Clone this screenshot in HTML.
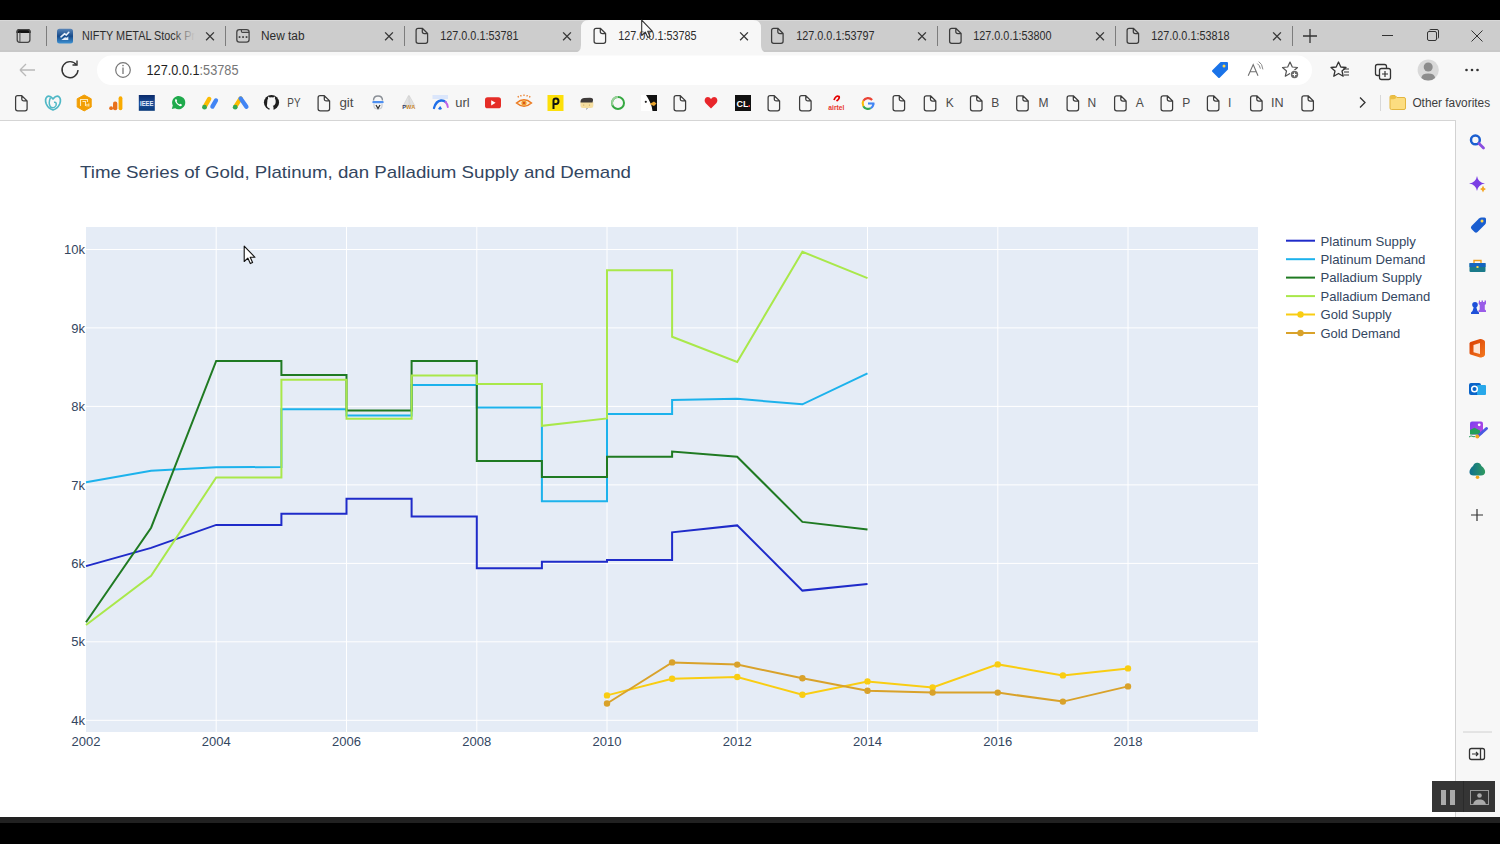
<!DOCTYPE html>
<html><head><meta charset="utf-8">
<style>
*{margin:0;padding:0;box-sizing:border-box}
html,body{width:1500px;height:844px;overflow:hidden;background:#000;font-family:"Liberation Sans",sans-serif}
.abs{position:absolute}
#tabbar{position:absolute;left:0;top:20px;width:1500px;height:32px;background:#cdcdcd}
#toolbar{position:absolute;left:0;top:52px;width:1500px;height:69px;background:#f7f7f7}
#bmline{position:absolute;left:0;top:120px;width:1456px;height:1px;background:#d5d5d5}
#page{position:absolute;left:0;top:121px;width:1455px;height:696px;background:#fff}
#side{position:absolute;left:1455px;top:121px;width:45px;height:696px;background:#f7f7f7;border-left:1px solid #d2d2d2}
#bot1{position:absolute;left:0;top:817px;width:1500px;height:6px;background:#212121}
.tab{position:absolute;top:20px;height:32px}
.tt{position:absolute;top:29px;font-size:12px;color:#2b2b2b;white-space:nowrap;letter-spacing:-0.1px}
.sep{position:absolute;top:26px;width:1px;height:20px;background:#7d7d7d}
.bt{position:absolute;top:95px;font-size:12px;color:#333;white-space:nowrap}
svg text.tk{font-family:"Liberation Sans",sans-serif;font-size:13px;fill:#33465f}
svg text.lg{font-family:"Liberation Sans",sans-serif;font-size:13px;fill:#33465f}
svg text.ttl{font-family:"Liberation Sans",sans-serif;font-size:17px;fill:#33465f}
</style></head><body>
<div id="tabbar"></div>
<div id="toolbar"></div>
<div class="abs" style="left:0;top:20px;width:1500px;height:1px;background:#d8d8d8"></div>
<div class="abs" style="left:0;top:50px;width:1500px;height:2px;background:#c8c8c8"></div>
<div id="bmline"></div>
<div id="page"></div>
<div id="side"></div>
<div id="bot1"></div>
<!-- active tab -->
<svg class="abs" style="left:573px;top:20px" width="196" height="33" viewBox="0 0 196 33">
<path d="M0 33 Q8 33 8 25 V8 Q8 0 16 0 H180 Q188 0 188 8 V25 Q188 33 196 33 Z" fill="#f7f7f7"/>
</svg>
<svg class="abs" style="left:0;top:0" width="1500" height="121" viewBox="0 0 1500 121">
<defs>
<g id="pg"><path d="M-3.8,-7.5 H0.3 L5.6,-2.3 V5.5 Q5.6,7.6 3.5,7.6 H-3.8 Q-5.9,7.6 -5.9,5.5 V-5.4 Q-5.9,-7.5 -3.8,-7.5 Z M0.3,-7.5 V-4.4 Q0.3,-2.3 2.4,-2.3 H5.6" fill="none" stroke="#3c3c3c" stroke-width="1.25" stroke-linejoin="round"/></g>
<g id="cx"><path d="M-3.9,-3.6 L3.9,4.2 M3.9,-3.6 L-3.9,4.2" stroke="#363636" stroke-width="1.3"/></g>
</defs>
<!-- tab actions -->
<path d="M17.1,32.5 V31.5 Q17.1,29.6 19.5,29.6 H27.6 Q30,29.6 30,31.5 V32.5 Z" fill="#111" stroke="#111" stroke-width="1.2"/>
<rect x="17.2" y="29.7" width="12.7" height="12.6" rx="2.5" fill="none" stroke="#444" stroke-width="1.3"/>
<path d="M19.9,32.6 V42.3" stroke="#555" stroke-width="1.1"/>
<!-- tab1 favicon -->
<defs><linearGradient id="nfg" x1="0" y1="0" x2="0" y2="1"><stop offset="0" stop-color="#5a86b8"/><stop offset=".5" stop-color="#164a8a"/><stop offset="1" stop-color="#3f93d4"/></linearGradient></defs>
<rect x="57" y="28.8" width="16" height="14.8" rx="2.5" fill="url(#nfg)"/>
<path d="M61,36.8 L64.5,33.8 L66.3,35 L68.8,32.3" fill="none" stroke="#e8f0fa" stroke-width="1.6" stroke-linecap="round"/>
<path d="M61.3,40 L65,37.3 L67,37.8 L68.3,36.2 V40 Z" fill="#e3ecf8"/>
<use href="#cx" x="210" y="36"/>
<!-- new tab icon -->
<rect x="236.8" y="29.6" width="12.3" height="12.5" rx="2.6" fill="none" stroke="#444" stroke-width="1.3"/>
<path d="M241.4,29.6 V31.2 Q241.4,32.3 242.5,32.3 H249.1" fill="none" stroke="#444" stroke-width="1.2"/>
<rect x="238.7" y="36.2" width="1.7" height="1.7" fill="#3a3a3a"/><rect x="242.2" y="36.2" width="1.7" height="1.7" fill="#3a3a3a"/><rect x="245.7" y="36.2" width="1.7" height="1.7" fill="#3a3a3a"/>
<use href="#cx" x="389" y="36"/>
<use href="#pg" x="422" y="35.8"/>
<use href="#cx" x="567" y="36"/>
<use href="#pg" x="600" y="35.8"/>
<use href="#cx" x="744" y="36"/>
<use href="#pg" x="777.5" y="35.8"/>
<use href="#cx" x="922" y="36"/>
<use href="#pg" x="955.5" y="35.8"/>
<use href="#cx" x="1100" y="36"/>
<use href="#pg" x="1133" y="35.8"/>
<use href="#cx" x="1277" y="36"/>
<!-- plus -->
<path d="M1310,29 V43 M1303,36 H1317" stroke="#333" stroke-width="1.3"/>
<!-- window controls -->
<path d="M1382,35.5 H1393" stroke="#333" stroke-width="1"/>
<rect x="1427.5" y="31.5" width="9" height="9" rx="1.5" fill="none" stroke="#333" stroke-width="1"/>
<path d="M1429.5,30 Q1430,29.5 1431,29.5 H1437 Q1438.5,29.5 1438.5,31 V37 Q1438.5,38 1438,38.5" fill="none" stroke="#333" stroke-width="1"/>
<path d="M1471.5,30.5 L1482.5,41.5 M1482.5,30.5 L1471.5,41.5" stroke="#333" stroke-width="1"/>
<!-- toolbar -->
<path d="M20,70 H35 M20,70 L26,64 M20,70 L26,76" fill="none" stroke="#b9b9b9" stroke-width="1.3"/>
<path d="M76.5,65 A8,8 0 1 0 78,70" fill="none" stroke="#333" stroke-width="1.4"/>
<path d="M72.5,65 H77 V60.5" fill="none" stroke="#333" stroke-width="1.4"/>
<rect x="97" y="55.5" width="1215" height="29.5" rx="14.75" fill="#fff"/>
<circle cx="123" cy="70" r="7.3" fill="none" stroke="#777" stroke-width="1.2"/>
<path d="M123,67.5 V74" stroke="#777" stroke-width="1.3"/><circle cx="123" cy="65.6" r=".8" fill="#777"/>
<!-- tag shopping -->
<path d="M1213,71 L1221,63 H1227 V69 L1219,77 Z" fill="#1a73e8" stroke="#1a73e8" stroke-width="2" stroke-linejoin="round"/>
<circle cx="1224" cy="66" r="1.5" fill="#ffd54a"/>
<!-- read aloud -->
<path d="M1248.2,75.8 L1253.2,64.6 L1258,75.8 M1249.9,71.8 H1256.5" fill="none" stroke="#707070" stroke-width="1.1"/>
<path d="M1257.3,63.6 Q1259.8,65.2 1260.4,68.6 M1258.7,61.6 Q1262.3,63.6 1262.9,69.4" fill="none" stroke="#8a8a8a" stroke-width="1"/>
<!-- star add -->
<path d="M1290,62 L1292.3,67 L1297.5,67.5 L1293.5,71 L1294.7,76.2 L1290,73.5 L1285.3,76.2 L1286.5,71 L1282.5,67.5 L1287.7,67 Z" fill="none" stroke="#555" stroke-width="1.2" stroke-linejoin="round"/>
<circle cx="1294.5" cy="74.5" r="4.6" fill="#fff"/><circle cx="1294.5" cy="74.5" r="3.7" fill="#6a6a6a"/><path d="M1294.5,72.5 V76.5 M1292.5,74.5 H1296.5" stroke="#fff" stroke-width="1.1"/>
<!-- favorites -->
<path d="M1338.5,62 L1340.8,67 L1346,67.5 L1342,71 L1343.2,76.2 L1338.5,73.5 L1333.8,76.2 L1335,71 L1331,67.5 L1336.2,67 Z" fill="none" stroke="#333" stroke-width="1.3" stroke-linejoin="round"/>
<path d="M1343,69 H1349 M1344,72 H1349 M1344,75 H1349" stroke="#333" stroke-width="1.2"/>
<!-- collections -->
<rect x="1375.5" y="64.5" width="11" height="11" rx="2" fill="none" stroke="#333" stroke-width="1.3"/>
<rect x="1379.5" y="68.5" width="11" height="11" rx="2" fill="#f7f7f7" stroke="#333" stroke-width="1.3"/>
<path d="M1385,71 V77 M1382,74 H1388" stroke="#333" stroke-width="1.2"/>
<!-- profile -->
<circle cx="1428.2" cy="70" r="10.6" fill="#d9d9d9"/>
<circle cx="1428.2" cy="67" r="4.5" fill="#8c8c8c"/>
<path d="M1421.3,78 Q1421.8,73.6 1428.2,73.6 Q1434.6,73.6 1435.1,78 Q1432.5,80.6 1428.2,80.6 Q1423.9,80.6 1421.3,78 Z" fill="#8c8c8c"/>
<!-- more -->
<circle cx="1466.5" cy="70" r="1.3" fill="#333"/><circle cx="1472" cy="70" r="1.3" fill="#333"/><circle cx="1477.5" cy="70" r="1.3" fill="#333"/>
</svg>
<svg class="abs" style="left:0;top:0" width="1500" height="121" viewBox="0 0 1500 121" font-family="Liberation Sans">
<defs><linearGradient id="fd" x1="0" x2="1"><stop offset="0.8" stop-color="#2b2b2b"/><stop offset="1" stop-color="#2b2b2b" stop-opacity="0"/></linearGradient></defs>
<text x="82" y="40" font-size="12" fill="url(#fd)" textLength="113" lengthAdjust="spacingAndGlyphs">NIFTY METAL Stock Pr</text>
<text x="261" y="40" font-size="12" fill="#2b2b2b" textLength="43.5" lengthAdjust="spacingAndGlyphs">New tab</text>
<text x="440.3" y="40" font-size="12" fill="#2b2b2b" textLength="78.2" lengthAdjust="spacingAndGlyphs">127.0.0.1:53781</text>
<text x="618.3" y="40" font-size="12" fill="#2b2b2b" textLength="78.2" lengthAdjust="spacingAndGlyphs">127.0.0.1:53785</text>
<text x="796.3" y="40" font-size="12" fill="#2b2b2b" textLength="78.2" lengthAdjust="spacingAndGlyphs">127.0.0.1:53797</text>
<text x="973.3" y="40" font-size="12" fill="#2b2b2b" textLength="78.2" lengthAdjust="spacingAndGlyphs">127.0.0.1:53800</text>
<text x="1151.3" y="40" font-size="12" fill="#2b2b2b" textLength="78.2" lengthAdjust="spacingAndGlyphs">127.0.0.1:53818</text>
<text x="146.5" y="75" font-size="14" fill="#1f1f1f" textLength="92" lengthAdjust="spacingAndGlyphs">127.0.0.1<tspan fill="#767676">:53785</tspan></text>
</svg>
<div class="sep" style="left:46px"></div>
<div class="sep" style="left:225px"></div>
<div class="sep" style="left:404px"></div>
<div class="sep" style="left:937px"></div>
<div class="sep" style="left:1115px"></div>
<div class="sep" style="left:1292px"></div>
<svg class="abs" style="left:0;top:85px" width="1456" height="35" viewBox="0 85 1456 35">
<defs>
<g id="bp"><path d="M-3.8,-7.5 H0.3 L5.6,-2.3 V5.5 Q5.6,7.6 3.5,7.6 H-3.8 Q-5.9,7.6 -5.9,5.5 V-5.4 Q-5.9,-7.5 -3.8,-7.5 Z M0.3,-7.5 V-4.4 Q0.3,-2.3 2.4,-2.3 H5.6" fill="none" stroke="#3c3c3c" stroke-width="1.25" stroke-linejoin="round"/></g>
</defs>
<use href="#bp" x="21.5" y="103.2"/>
<!-- godaddy -->
<path d="M53,98.8 Q49.5,95 47,96.8 Q44.5,99 46.3,104 Q48.5,108.8 53,110 Q57.5,108.8 59.7,104 Q61.5,99 59,96.8 Q56.5,95 53,98.8 Z" fill="none" stroke="#4fb8c6" stroke-width="1.7"/>
<path d="M50.5,97.5 Q48,103 50.5,107 Q54,109 56,105.5 Q57,102 54,102.3" fill="none" stroke="#4fb8c6" stroke-width="1.5"/>
<!-- orange hex -->
<path d="M84.2,95 L91.2,98.8 V107 L84.2,110.9 L77.2,107 V98.8 Z" fill="#f29f05" stroke="#f29f05" stroke-width="1" stroke-linejoin="round"/>
<path d="M80.5,106 V99.5 H87.5 V102 M82.5,101.5 H85.5 V106 M87,104 V106.5 M88.8,103.5 V106.5" fill="none" stroke="#fde9b8" stroke-width="1.1"/>
<!-- analytics -->
<circle cx="111.1" cy="108.2" r="1.9" fill="#e8711c"/>
<rect x="113" y="101.4" width="4.3" height="8.8" rx="2" fill="#e8711c"/>
<rect x="118.6" y="96.3" width="3.8" height="13.9" rx="1.9" fill="#f9ab00"/>
<!-- IEEE -->
<defs><linearGradient id="ieg" x1="0" y1="0" x2="0" y2="1"><stop offset="0" stop-color="#0b2a6a"/><stop offset=".55" stop-color="#1a4f9a"/><stop offset="1" stop-color="#0a3a7a"/></linearGradient></defs>
<rect x="138.8" y="95" width="16" height="15.8" fill="url(#ieg)"/>
<text x="140" y="105.7" font-size="7.2" fill="#e8eefa" font-family="Liberation Sans" font-weight="bold" textLength="13.5" lengthAdjust="spacingAndGlyphs">IEEE</text>
<!-- whatsapp -->
<path d="M171.8,109 L172.8,105.6 A6.6,6.6 0 1 1 175.2,108.2 Z" fill="#1faa4c"/>
<path d="M175.3,99.3 Q174.8,100.2 175.3,101.8 Q176.5,104.6 179.6,106 Q181,106.4 181.7,105.7 L181.8,104.6 L180.1,103.8 L179.3,104.5 Q177.4,103.6 176.6,101.8 L177.2,101 L176.5,99.2 Z" fill="#fff"/>
<!-- google ads -->
<path d="M204.8,106.6 L209.2,98.9" stroke="#fbbc04" stroke-width="4.3" stroke-linecap="round"/>
<path d="M212.4,106.6 L216,100.4" stroke="#4285f4" stroke-width="4.3" stroke-linecap="round"/>
<circle cx="204.5" cy="107.2" r="2.4" fill="#34a853"/>
<!-- ads A -->
<path d="M240.6,98.4 L235.8,105.8" stroke="#fbbc04" stroke-width="4.3" stroke-linecap="round"/>
<path d="M240.6,98.4 L246.4,106.8" stroke="#4285f4" stroke-width="4.3" stroke-linecap="round"/>
<circle cx="235.2" cy="107.2" r="2.4" fill="#34a853"/>
<!-- github -->
<g transform="translate(271.5,102.5)">
<circle r="7.6" fill="#1f1f1f"/>
<path d="M-4.2,-0.6 Q-4.4,-2.8 -3.4,-4 L-3.5,-6 L-1.6,-5 Q0,-5.5 1.6,-5 L3.5,-6 L3.4,-4 Q4.4,-2.8 4.2,-0.6 Q4,2.6 1.3,3.3 Q2,3.9 2,5 V7.8 H-2 V5.6 Q-3.6,6 -4.6,3.6" fill="#f7f7f7"/>
<path d="M-2,5 Q-2,3.9 -1.3,3.3 Q-4,2.6 -4.2,-0.6" fill="none" stroke="#f7f7f7" stroke-width=".2"/>
</g>
<use href="#bp" x="324" y="103.2"/>
<!-- misc icon 378 -->
<path d="M373.5,100.5 Q373.5,96 378,96 Q382.5,96 382.5,100.5" fill="none" stroke="#8a8f96" stroke-width="1.4"/>
<rect x="372.3" y="101" width="11.4" height="2.2" rx="1" fill="#4d8ff0"/>
<path d="M374,104 V106 Q374,109 378,109 Q382,109 382,106 V104" fill="none" stroke="#c8ccd2" stroke-width="1.2"/>
<path d="M376,105 L378,108.5 L380,105" fill="none" stroke="#333" stroke-width="1.3"/>
<!-- PWA -->
<path d="M403,106 L408.5,95.5 L409.5,106 Z M410,106 L409.2,95.5 L415,106 Z" fill="#e2e2e2" stroke="#c9c9c9" stroke-width=".5"/>
<text x="402.3" y="109.3" font-size="5.6" font-weight="bold" fill="#2e3a6a" font-family="Liberation Sans" textLength="13" lengthAdjust="spacingAndGlyphs">P<tspan fill="#c8862a">WA</tspan></text>
<!-- arc -->
<rect x="432.5" y="95" width="15.5" height="4" fill="#dbe6fb"/>
<path d="M434,108 Q436,101 441,100.5 Q444,100.3 445.5,102" fill="none" stroke="#1f6fe8" stroke-width="2.3" stroke-linecap="round"/>
<path d="M445.5,102 Q447.5,104 447.8,107" fill="none" stroke="#c062e6" stroke-width="2" stroke-linecap="round"/>
<path d="M438,108.8 L440.2,106 L442,108.8 Q440,110.5 438,108.8 Z" fill="#1f6fe8"/>
<!-- youtube -->
<rect x="485" y="97.3" width="16" height="11" rx="2.6" fill="#e52d27"/>
<path d="M491.2,100.2 L495.6,102.8 L491.2,105.4 Z" fill="#fff"/>
<!-- eye -->
<path d="M516.5,103 Q524,96.5 531.5,103 Q524,109.5 516.5,103 Z" fill="#fdeccf" stroke="#ec7a22" stroke-width="1.5"/>
<circle cx="524" cy="103" r="2.6" fill="#f0a030"/>
<circle cx="524" cy="103" r="1.2" fill="#d9531e"/>
<path d="M518.5,97.5 L518,96 M521,96.5 L520.8,95 M524,96 V94.6 M527,96.5 L527.2,95 M529.5,97.5 L530,96" stroke="#ec7a22" stroke-width="1.2"/>
<!-- P -->
<rect x="547.5" y="95" width="16" height="16" fill="#fde00a"/>
<path d="M553.5,109 V100.5 Q553.5,98.5 556,98.5 Q558.5,98.5 558.5,101.3 Q558.5,104 556,104 H553.5" fill="none" stroke="#111" stroke-width="2"/>
<!-- face -->
<path d="M580.5,102 V106 Q580.5,108 583,108 H591 Q593.3,108 593.3,106 V102 Z" fill="#f5dea0"/>
<path d="M580.5,103 Q580,98.5 584,98 L590,97.8 Q593.5,98 593,100.5 L592.5,102.5 H580.5 Z" fill="#3f3b3a"/>
<circle cx="583.7" cy="105" r=".6" fill="#b89a5a"/><circle cx="589.5" cy="105" r=".6" fill="#b89a5a"/>
<path d="M586,108.5 Q586.5,109.5 587.5,108.5" fill="none" stroke="#555" stroke-width=".7"/>
<!-- green circle -->
<circle cx="618" cy="103" r="6" fill="none" stroke="#34a840" stroke-width="2"/>
<path d="M618,97 A6,6 0 0 0 612.5,105.3" fill="none" stroke="#9ad29a" stroke-width="2"/>
<!-- penguin -->
<rect x="641" y="95" width="16" height="16" fill="#fff"/>
<path d="M646,95 H657 V111 H652.5 Q652,104 646,95 Z" fill="#111"/>
<circle cx="645.8" cy="101.8" r="1.1" fill="#222"/>
<path d="M649.5,104 L654,101.5 L656.5,103.5 L654,106 Z" fill="#e9a530"/>
<use href="#bp" x="680" y="103.2"/>
<!-- heart -->
<path d="M711,108.5 L705.5,103 Q703.5,100 706,97.5 Q709,96 711,99 Q713,96 716,97.5 Q718.5,100 716.5,103 Z" fill="#e8262b"/>
<!-- CL -->
<rect x="735" y="95" width="16" height="16" fill="#111"/>
<text x="736.5" y="106.5" font-size="9" font-weight="bold" fill="#fff" font-family="Liberation Sans">CL</text>
<rect x="748.5" y="105" width="1.5" height="2" fill="#e33"/>
<use href="#bp" x="774" y="103.2"/>
<use href="#bp" x="805.5" y="103.2"/>
<!-- airtel -->
<path d="M834,100 Q836,95 839,96.5 Q840,98.5 836.5,101" fill="none" stroke="#e40000" stroke-width="1.8"/>
<text x="828.3" y="110" font-size="6.8" font-weight="bold" fill="#e8382e" font-family="Liberation Sans" textLength="16" lengthAdjust="spacingAndGlyphs">airtel</text>
<!-- G -->
<path d="M872.14,100.03 A5.4,5.4 0 0 0 863.32,100.80" fill="none" stroke="#ea4335" stroke-width="2.1"/>
<path d="M863.32,100.80 A5.4,5.4 0 0 0 863.32,106.20" fill="none" stroke="#fbbc05" stroke-width="2.1"/>
<path d="M863.32,106.20 A5.4,5.4 0 0 0 870.70,108.18" fill="none" stroke="#34a853" stroke-width="2.1"/>
<path d="M870.70,108.18 A5.4,5.4 0 0 0 873.40,103.50" fill="none" stroke="#4285f4" stroke-width="2.1"/>
<path d="M868,103.5 H874.4" stroke="#4285f4" stroke-width="2.1"/>
<use href="#bp" x="899" y="103.2"/>
<use href="#bp" x="930.2" y="103.3"/>
<use href="#bp" x="976.4" y="103.3"/>
<use href="#bp" x="1022.6" y="103.3"/>
<use href="#bp" x="1073" y="103.3"/>
<use href="#bp" x="1120.5" y="103.3"/>
<use href="#bp" x="1167" y="103.3"/>
<use href="#bp" x="1213.3" y="103.3"/>
<use href="#bp" x="1256.5" y="103.3"/>
<use href="#bp" x="1307.8" y="103.3"/>
<path d="M1360,97.5 L1365,102.5 L1360,107.5" fill="none" stroke="#333" stroke-width="1.3"/>
<path d="M1380.5,95 V111" stroke="#d8d8d8" stroke-width="1"/>
<path d="M1390,97 Q1390,95.5 1391.5,95.5 H1395 L1397,97.5 H1404 Q1405.5,97.5 1405.5,99 V108 Q1405.5,109.5 1404,109.5 H1391.5 Q1390,109.5 1390,108 Z" fill="#fcdd80" stroke="#e3b640" stroke-width="1"/>
<path d="M1390.2,99.2 V97 Q1390.2,95.7 1391.5,95.7 H1394.6 Q1396.5,95.7 1396.5,97.4 Q1395.5,99.2 1393.5,99.2 Z" fill="#ebbf45"/>
</svg>
<svg class="abs" style="left:0;top:85px" width="1500" height="35" viewBox="0 85 1500 35" font-family="Liberation Sans">
<text x="287.3" y="107.2" font-size="12" fill="#4a4a4a" textLength="13.2" lengthAdjust="spacingAndGlyphs">PY</text>
<text x="339.4" y="107.2" font-size="12" fill="#4a4a4a" textLength="14.2" lengthAdjust="spacingAndGlyphs">git</text>
<text x="455.2" y="107.2" font-size="12" fill="#4a4a4a" textLength="14.4" lengthAdjust="spacingAndGlyphs">url</text>
<text x="949.8" y="107.2" font-size="12" fill="#4a4a4a" text-anchor="middle">K</text>
<text x="995.3" y="107.2" font-size="12" fill="#4a4a4a" text-anchor="middle">B</text>
<text x="1043.5" y="107.2" font-size="12" fill="#4a4a4a" text-anchor="middle">M</text>
<text x="1091.9" y="107.2" font-size="12" fill="#4a4a4a" text-anchor="middle">N</text>
<text x="1139.8" y="107.2" font-size="12" fill="#4a4a4a" text-anchor="middle">A</text>
<text x="1186.2" y="107.2" font-size="12" fill="#4a4a4a" text-anchor="middle">P</text>
<text x="1229.7" y="107.2" font-size="12" fill="#4a4a4a" text-anchor="middle">I</text>
<text x="1271.0" y="107.2" font-size="12" fill="#4a4a4a" textLength="12.6" lengthAdjust="spacingAndGlyphs">IN</text>
<text x="1412.4" y="107.2" font-size="12" fill="#3d3d3d" textLength="77.7" lengthAdjust="spacingAndGlyphs">Other favorites</text>
</svg>
<!-- sidebar -->
<svg class="abs" style="left:1456px;top:121px" width="44" height="700" viewBox="1456 121 44 700">
<circle cx="1475.4" cy="139.9" r="4.4" fill="none" stroke="#1a5fd0" stroke-width="2.5"/>
<path d="M1479,143.5 L1483.5,148" stroke="#8a4ee0" stroke-width="2.8" stroke-linecap="round"/>
<path d="M1477,176 Q1478,182.5 1485,183.5 Q1478,184.5 1477,191 Q1476,184.5 1469,183.5 Q1476,182.5 1477,176 Z" fill="#7b3fe4"/>
<path d="M1483,185.5 Q1483.6,188.4 1486,189 Q1483.6,189.6 1483,192.5 Q1482.4,189.6 1480,189 Q1482.4,188.4 1483,185.5Z" fill="#f5a623"/>
<path d="M1471.5,226 L1479,218.5 Q1480,217.5 1481.5,217.5 H1484.5 Q1486,217.5 1486,219 V222 Q1486,223.5 1485,224.5 L1477.5,232 Q1476,233.3 1474.5,232 L1471.5,229 Q1470.2,227.5 1471.5,226 Z" fill="#1a5ed0"/>
<circle cx="1482" cy="221" r="1.5" fill="#ffd54a"/>
<rect x="1469.5" y="263" width="16" height="9" rx="1" fill="#1a7a8a"/>
<rect x="1469.5" y="263" width="16" height="4" fill="#1565c0"/>
<path d="M1474,263 V260.5 H1481 V263" fill="none" stroke="#f0a020" stroke-width="1.4"/>
<rect x="1476.5" y="266" width="2" height="2" fill="#ffd54a"/>
<defs><linearGradient id="ofg" x1="0" y1="0" x2="1" y2="1"><stop offset="0" stop-color="#d83b01"/><stop offset="1" stop-color="#f47a20"/></linearGradient></defs>
<path d="M1479,300.5 H1480 V302 H1481.5 V300.5 H1483 V302 H1484.5 V300.5 H1486 V304 L1484.8,305 V309.5 L1486,310.5 V312 H1478.5 V310.5 L1479.7,309.5 V305 L1478.5,304 Z" fill="#9a5ce8"/>
<circle cx="1475" cy="304.8" r="2.8" fill="#1e50d8"/>
<path d="M1473.8,307 H1476.2 L1477.5,311 L1479,312.5 V314 H1471 V312.5 L1472.5,311 Z" fill="#1e50d8"/>
<path d="M1469.5,343.5 Q1469.5,342.5 1470.5,342 L1480,339 Q1481,338.8 1482,339.3 L1484,340.3 Q1485,340.8 1485,342 V354.5 Q1485,355.7 1484,356.2 L1482,357.2 Q1481,357.7 1480,357.4 L1470.5,354.5 Q1469.5,354 1469.5,353 Z" fill="url(#ofg)"/>
<path d="M1473.5,345 L1480,343 V354 L1473.5,352.3 Z" fill="#fde6d8"/>
<rect x="1469" y="383" width="12" height="12" rx="2" fill="#0a64c8"/>
<rect x="1477" y="385" width="9" height="10" rx="1" fill="#28a8ea"/>
<circle cx="1474.5" cy="389" r="2.8" fill="none" stroke="#fff" stroke-width="1.5"/>
<defs><linearGradient id="trg" x1="0" x2="1"><stop offset="0" stop-color="#0f6f8f"/><stop offset="1" stop-color="#2f9a5e"/></linearGradient>
<linearGradient id="dsg" x1="0" y1="0" x2="1" y2="1"><stop offset="0" stop-color="#7a3cf0"/><stop offset="1" stop-color="#c04ae0"/></linearGradient></defs>
<rect x="1470" y="421.5" width="13" height="13" rx="2" fill="url(#dsg)"/>
<circle cx="1479.2" cy="424.8" r="1.4" fill="#fff"/>
<path d="M1470,434.5 V430 L1474.5,427.8 L1480,430.5 V434.5 Z" fill="#22a05a"/>
<path d="M1477.5,436.5 L1486.5,428.5" stroke="#4a5ae0" stroke-width="3" stroke-linecap="round"/>
<circle cx="1477.3" cy="436.4" r="2" fill="#f0a820"/>
<path d="M1469,437 Q1471,435 1473,436.5 Q1474.5,437.5 1475,436" fill="none" stroke="#2a9a5a" stroke-width="1"/>
<path d="M1477.3,462.7 Q1480,462.5 1481.5,466 Q1485.5,469 1485.1,472.5 Q1484.5,475.5 1481,475.5 H1473.5 Q1469.8,475.5 1469.5,472.5 Q1469.2,469 1473,466 Q1474.5,462.5 1477.3,462.7 Z" fill="url(#trg)"/>
<circle cx="1477.5" cy="477.3" r="1.8" fill="#f0a820"/>
<path d="M1477,509 V521 M1471,515 H1483" stroke="#333" stroke-width="1.2"/>
<path d="M1463,732 H1492" stroke="#d0d0d0" stroke-width="1"/>
<rect x="1469.5" y="748.5" width="15" height="11" rx="2" fill="none" stroke="#333" stroke-width="1.3"/>
<path d="M1480.5,748.5 V759.5" stroke="#333" stroke-width="1.3"/>
<path d="M1472,754 H1478 M1476,752 L1478,754 L1476,756" fill="none" stroke="#333" stroke-width="1.2"/>
</svg>
<!-- overlay control -->
<div class="abs" style="left:1432px;top:781px;width:63px;height:31px;background:#353535"></div>
<div class="abs" style="left:1463px;top:781px;width:1px;height:31px;background:#2a2a2a"></div>
<div class="abs" style="left:1441px;top:790px;width:5px;height:15px;background:#aaa"></div>
<div class="abs" style="left:1449.5px;top:790px;width:5px;height:15px;background:#aaa"></div>
<svg class="abs" style="left:1468px;top:788px" width="24" height="20" viewBox="0 0 24 20">
<rect x="2.5" y="2.5" width="18" height="14" fill="none" stroke="#999" stroke-width="1"/>
<circle cx="11.5" cy="7.5" r="2.3" fill="#aaa"/>
<path d="M5,16.5 Q6,12 10,11.5 H13 Q17,12 18,16.5 Z" fill="#aaa"/>
</svg>

<svg class="abs" style="left:0;top:0" width="1500" height="844" viewBox="0 0 1500 844">
<rect x="86" y="227" width="1172" height="505" fill="#e5ecf6"/>
<line x1="216.2" y1="227" x2="216.2" y2="732" stroke="#ffffff" stroke-width="1"/>
<line x1="346.5" y1="227" x2="346.5" y2="732" stroke="#ffffff" stroke-width="1"/>
<line x1="476.8" y1="227" x2="476.8" y2="732" stroke="#ffffff" stroke-width="1"/>
<line x1="607.0" y1="227" x2="607.0" y2="732" stroke="#ffffff" stroke-width="1"/>
<line x1="737.2" y1="227" x2="737.2" y2="732" stroke="#ffffff" stroke-width="1"/>
<line x1="867.5" y1="227" x2="867.5" y2="732" stroke="#ffffff" stroke-width="1"/>
<line x1="997.8" y1="227" x2="997.8" y2="732" stroke="#ffffff" stroke-width="1"/>
<line x1="1128.0" y1="227" x2="1128.0" y2="732" stroke="#ffffff" stroke-width="1"/>
<line x1="86" y1="720.3" x2="1258" y2="720.3" stroke="#ffffff" stroke-width="1"/>
<line x1="86" y1="641.8" x2="1258" y2="641.8" stroke="#ffffff" stroke-width="1"/>
<line x1="86" y1="563.4" x2="1258" y2="563.4" stroke="#ffffff" stroke-width="1"/>
<line x1="86" y1="484.9" x2="1258" y2="484.9" stroke="#ffffff" stroke-width="1"/>
<line x1="86" y1="406.4" x2="1258" y2="406.4" stroke="#ffffff" stroke-width="1"/>
<line x1="86" y1="327.9" x2="1258" y2="327.9" stroke="#ffffff" stroke-width="1"/>
<line x1="86" y1="249.5" x2="1258" y2="249.5" stroke="#ffffff" stroke-width="1"/>
<polyline points="86.0,566.1 151.1,547.9 216.2,524.9 281.4,524.9 281.4,513.7 346.5,513.7 346.5,498.8 411.6,498.8 411.6,516.5 476.8,516.5 476.8,568.2 541.9,568.2 541.9,561.8 607.0,561.8 607.0,560.1 672.1,560.1 672.1,532.3 737.2,525.4 802.4,590.6 867.5,583.9" fill="none" stroke="#1f2bc9" stroke-width="2" stroke-linejoin="miter"/>
<polyline points="86.0,482.2 151.1,470.8 216.2,467.3 281.4,467.0 281.4,409.2 346.5,409.2 346.5,415.4 411.6,415.4 411.6,385.0 476.8,385.0 476.8,407.5 541.9,407.5 541.9,501.2 607.0,501.2 607.0,413.9 672.1,413.9 672.1,400.0 737.2,398.8 802.4,404.3 867.5,373.4" fill="none" stroke="#1cb2ec" stroke-width="2" stroke-linejoin="miter"/>
<polyline points="86.0,622.3 151.1,527.7 216.2,360.9 281.4,360.9 281.4,375.1 346.5,375.1 346.5,410.4 411.6,410.4 411.6,360.9 476.8,360.9 476.8,460.9 541.9,460.9 541.9,477.0 607.0,477.0 607.0,456.7 672.1,456.7 672.1,451.5 737.2,456.7 802.4,521.9 867.5,529.5" fill="none" stroke="#1f7a22" stroke-width="2" stroke-linejoin="miter"/>
<polyline points="86.0,625.0 151.1,575.8 216.2,477.5 281.4,477.5 281.4,379.8 346.5,379.8 346.5,418.7 411.6,418.7 411.6,375.6 476.8,375.6 476.8,383.9 541.9,383.9 541.9,425.8 607.0,418.4 607.0,270.3 672.1,270.3 672.1,336.7 737.2,362.0 802.4,251.8 867.5,278.1" fill="none" stroke="#a9e84a" stroke-width="2" stroke-linejoin="miter"/>
<polyline points="607.0,695.4 672.1,678.8 737.2,677.0 802.4,694.7 867.5,681.4 932.6,687.4 997.8,664.4 1062.9,675.4 1128.0,668.4" fill="none" stroke="#f9cd12" stroke-width="2"/>
<circle cx="607" cy="695.4" r="3.2" fill="#f9cd12"/>
<circle cx="672.1" cy="678.8" r="3.2" fill="#f9cd12"/>
<circle cx="737.25" cy="677" r="3.2" fill="#f9cd12"/>
<circle cx="802.4" cy="694.7" r="3.2" fill="#f9cd12"/>
<circle cx="867.5" cy="681.4" r="3.2" fill="#f9cd12"/>
<circle cx="932.6" cy="687.4" r="3.2" fill="#f9cd12"/>
<circle cx="997.75" cy="664.4" r="3.2" fill="#f9cd12"/>
<circle cx="1062.9" cy="675.4" r="3.2" fill="#f9cd12"/>
<circle cx="1128" cy="668.4" r="3.2" fill="#f9cd12"/>
<polyline points="607.0,703.5 672.1,662.4 737.2,664.6 802.4,678.3 867.5,690.8 932.6,692.6 997.8,692.6 1062.9,701.6 1128.0,686.4" fill="none" stroke="#d9a22a" stroke-width="2"/>
<circle cx="607" cy="703.5" r="3.2" fill="#d9a22a"/>
<circle cx="672.1" cy="662.4" r="3.2" fill="#d9a22a"/>
<circle cx="737.25" cy="664.6" r="3.2" fill="#d9a22a"/>
<circle cx="802.4" cy="678.3" r="3.2" fill="#d9a22a"/>
<circle cx="867.5" cy="690.8" r="3.2" fill="#d9a22a"/>
<circle cx="932.6" cy="692.6" r="3.2" fill="#d9a22a"/>
<circle cx="997.75" cy="692.6" r="3.2" fill="#d9a22a"/>
<circle cx="1062.9" cy="701.6" r="3.2" fill="#d9a22a"/>
<circle cx="1128" cy="686.4" r="3.2" fill="#d9a22a"/>
<text x="85" y="724.9" text-anchor="end" class="tk">4k</text>
<text x="85" y="646.4" text-anchor="end" class="tk">5k</text>
<text x="85" y="568.0" text-anchor="end" class="tk">6k</text>
<text x="85" y="489.5" text-anchor="end" class="tk">7k</text>
<text x="85" y="411.0" text-anchor="end" class="tk">8k</text>
<text x="85" y="332.5" text-anchor="end" class="tk">9k</text>
<text x="85" y="254.1" text-anchor="end" class="tk">10k</text>
<text x="86.0" y="746" text-anchor="middle" class="tk">2002</text>
<text x="216.2" y="746" text-anchor="middle" class="tk">2004</text>
<text x="346.5" y="746" text-anchor="middle" class="tk">2006</text>
<text x="476.8" y="746" text-anchor="middle" class="tk">2008</text>
<text x="607.0" y="746" text-anchor="middle" class="tk">2010</text>
<text x="737.2" y="746" text-anchor="middle" class="tk">2012</text>
<text x="867.5" y="746" text-anchor="middle" class="tk">2014</text>
<text x="997.8" y="746" text-anchor="middle" class="tk">2016</text>
<text x="1128.0" y="746" text-anchor="middle" class="tk">2018</text>
<line x1="1286" y1="240.7" x2="1315" y2="240.7" stroke="#1f2bc9" stroke-width="2"/>
<text x="1320.5" y="245.5" class="lg" textLength="95.3" lengthAdjust="spacingAndGlyphs">Platinum Supply</text>
<line x1="1286" y1="259.2" x2="1315" y2="259.2" stroke="#1cb2ec" stroke-width="2"/>
<text x="1320.5" y="264.0" class="lg" textLength="104.9" lengthAdjust="spacingAndGlyphs">Platinum Demand</text>
<line x1="1286" y1="277.6" x2="1315" y2="277.6" stroke="#1f7a22" stroke-width="2"/>
<text x="1320.5" y="282.4" class="lg" textLength="101.2" lengthAdjust="spacingAndGlyphs">Palladium Supply</text>
<line x1="1286" y1="296.1" x2="1315" y2="296.1" stroke="#a9e84a" stroke-width="2"/>
<text x="1320.5" y="300.9" class="lg" textLength="109.8" lengthAdjust="spacingAndGlyphs">Palladium Demand</text>
<line x1="1286" y1="314.5" x2="1315" y2="314.5" stroke="#f9cd12" stroke-width="2"/>
<circle cx="1300.5" cy="314.5" r="3.2" fill="#f9cd12"/>
<text x="1320.5" y="319.3" class="lg" textLength="71.1" lengthAdjust="spacingAndGlyphs">Gold Supply</text>
<line x1="1286" y1="333.0" x2="1315" y2="333.0" stroke="#d9a22a" stroke-width="2"/>
<circle cx="1300.5" cy="333.0" r="3.2" fill="#d9a22a"/>
<text x="1320.5" y="337.8" class="lg" textLength="79.8" lengthAdjust="spacingAndGlyphs">Gold Demand</text>
<text x="80" y="178" class="ttl" textLength="551" lengthAdjust="spacingAndGlyphs">Time Series of Gold, Platinum, dan Palladium Supply and Demand</text>
</svg>
<svg class="abs" style="left:240px;top:243px" width="20" height="24" viewBox="0 0 20 24">
<path d="M4.2,3.1 V18.5 L7.8,15.1 L10.3,20.6 L12.6,19.6 L10.2,14.3 H15 Z" fill="#fff" stroke="#111" stroke-width="1.1" stroke-linejoin="round"/>
</svg>
<svg class="abs" style="left:638px;top:17px" width="20" height="24" viewBox="0 0 20 24">
<path d="M3.7,3.2 V18.5 L7.3,15.1 L9.8,20.6 L12.1,19.6 L9.7,14.3 H14.5 Z" fill="#fff" fill-opacity=".6" stroke="#333" stroke-width="1.1" stroke-linejoin="round"/>
</svg>
</body></html>
